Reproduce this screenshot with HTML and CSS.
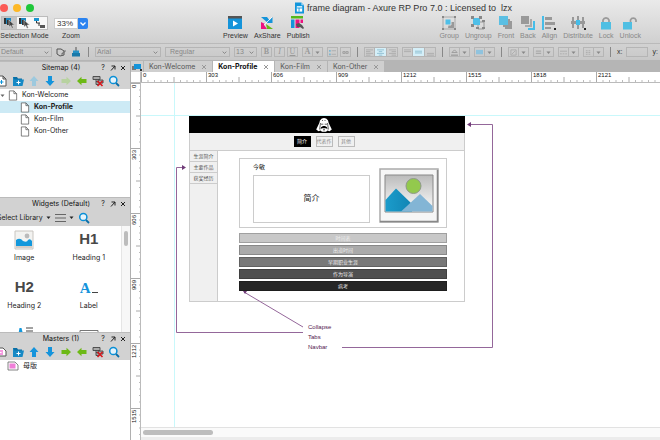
FILE: index.html
```html
<!DOCTYPE html>
<html lang="en">
<head>
<meta charset="utf-8">
<title>frame diagram - Axure RP Pro 7.0</title>
<link rel="stylesheet" href="styles.css">
</head>
<body>
<svg class="defs" aria-hidden="true">
  <symbol id="chev" viewBox="0 0 5 5"><path d="M.7 1.6 2.5 3.5 4.3 1.6" fill="none" stroke="currentColor"/></symbol>
  <symbol id="tri" viewBox="0 0 5 5"><path d="M.5 1.5h4L2.500 4z" fill="currentColor"/></symbol>
  <symbol id="close" viewBox="0 0 6 6"><path d="m1 1 4 4M5 1 1 5" fill="none" stroke="currentColor"/></symbol>
  <symbol id="popout" viewBox="0 0 6 6"><path d="M1.500 1H5v3.500M5 1 1 5.500" fill="none" stroke="currentColor"/></symbol>
  <symbol id="page" viewBox="0 0 10 12"><path d="M1 1h5l3 3v7H1zM6 1v3h3" fill="#fff" stroke="#555" stroke-width=".8"/></symbol>
  <symbol id="addpage" viewBox="0 0 12 12"><path d="M1 1h6l3 3v7H1zM7 1v3h3" fill="#fff" stroke="#555"/><path d="M5.500 5v4M3.500 7h4" stroke="#0a93d8"/></symbol>
  <symbol id="addmaster" viewBox="0 0 12 12"><path d="M0 2h7l3 3v5H0z" fill="#fff" stroke="#555"/><path d="M0 4h7v5H0z" fill="#f59ae0"/><path d="M3.500 4.500v4M1.500 6.500h4" stroke="#fff"/></symbol>
  <symbol id="master" viewBox="0 0 12 10"><path d="M1 1h7l3 3v5H1z" fill="#fff" stroke="#666" stroke-width=".8"/><path d="M2.500 2.500h6v5h-6z" fill="#f07fd8"/></symbol>
  <symbol id="folder" viewBox="0 0 12 12"><path d="M1 2h4l1 1.500h4V5H1z" fill="#0b6fa5"/><path d="M2.500 4.500H12L10.500 11H1V2z" fill="#1689c5"/><path d="M6.500 5.500v4M4.500 7.500h4" stroke="#fff"/></symbol>
  <symbol id="up" viewBox="0 0 12 12"><path d="M6 1 10.500 6H8v5H4V6H1.500z" fill="currentColor"/></symbol>
  <symbol id="down" viewBox="0 0 12 12"><path d="M6 11 10.500 6H8V1H4v5H1.500z" fill="currentColor"/></symbol>
  <symbol id="right" viewBox="0 0 12 12"><path d="M11 6 6.500 1.800V4H1.500v4h5v2.200z" fill="currentColor"/></symbol>
  <symbol id="left" viewBox="0 0 12 12"><path d="M1 6 5.500 1.800V4h5v4h-5v2.200z" fill="currentColor"/></symbol>
  <symbol id="remove" viewBox="0 0 12 12"><path d="M1 1.500h7v3H1zM4 4.500v5h3M4 6.500h3M6 5h5v3H6z" fill="#aaa" stroke="#444" stroke-width=".9"/><path d="m5.500 6 5 5M10.500 6l-5 5" stroke="#d9161c" stroke-width="1.600"/></symbol>
  <symbol id="search" viewBox="0 0 12 12"><circle cx="5.300" cy="5" r="3.600" fill="#e6f3fa" stroke="#0a8fd6" stroke-width="1.500"/><path d="m8 8 3 3" stroke="#0a6ea8" stroke-width="1.800"/></symbol>
  <symbol id="cursor" viewBox="0 0 14 12"><path d="M2 1h7v6H2z" fill="#1b86bd"/><path d="M2 1h2v6H2zM5 3h2v5H5z" fill="#333"/><path d="m7 3 5.500 5H10l1.300 2.700-1.300.5L8.800 8.500 7 10z" fill="#444" stroke="#e4e4e4" stroke-width=".5"/></symbol>
</svg>

<header class="toolbar">
  <div class="titlebar">
    <div class="lights"><i class="red"></i><i class="amber"></i><i class="green"></i></div>
    <div class="title">
      <svg viewBox="0 0 10 12" width="9" height="12"><path d="M0 0h7l3 3v9H0z" fill="#1296dc"/><path d="M2 4h6v6H2z" fill="#fff"/><path d="M2 6h6M4.500 6v4" stroke="#1296dc"/><path d="M7 0v3h3z" fill="#9ad4f2"/></svg>
      <span>frame diagram - Axure RP Pro 7.0 : Licensed to&nbsp; lzx</span>
    </div>
  </div>
  <div class="tools">
    <div class="tool modes">
      <div class="segments">
        <button class="on" aria-label="Select intersected"><svg width="14" height="12"><use href="#cursor"/></svg></button>
        <button aria-label="Select contained"><svg width="14" height="12"><use href="#cursor"/></svg></button>
        <button aria-label="Connector"><svg viewBox="0 0 14 12" width="14" height="12"><path d="M2 1h5v3H2z" fill="#1b95d0"/><path d="M8 8h5v3H8z" fill="#555"/><path d="M4.500 4v2H8M7 6v3" fill="none" stroke="#333"/></svg></button>
      </div>
      <span>Selection Mode</span>
    </div>
    <div class="tool zoom">
      <div class="zoombox"><select id="zoom"><option>33%</option></select><svg width="10" height="11" viewBox="0 0 10 11"><path d="M2.500 4.500 5 7l2.500-2.500" fill="none" stroke="#fff" stroke-width="1.300"/></svg></div>
      <label for="zoom">Zoom</label>
    </div>
    <div class="toolset share">
      <button class="tool"><svg viewBox="0 0 16 14"><path d="M1 1h14v12H1z" fill="#1594da"/><path d="M1 0h14v2.500H1z" fill="#555"/><path d="M6 4.500 11 7.500 6 10.500z" fill="#fff"/></svg><span>Preview</span></button>
      <button class="tool"><svg viewBox="0 0 16 14"><path d="M2 1h6l3 4-2 2z" fill="#1594da"/><path d="M8 7 13.500 1v6z" fill="#1594da"/><path d="M2 13V6l4 2-1 1 3 4z" fill="#ec1380"/><path d="m7 8 7 5H8z" fill="#65b816"/><path d="M5 9 13 1" stroke="#fff" stroke-width=".8"/></svg><span>AxShare</span></button>
      <button class="tool"><svg viewBox="0 0 16 14"><path d="M1 0h12v2.500H1z" fill="#57b81b"/><path d="M1 3.500h3.500V12H1z" fill="#1594da"/><path d="M5.500 3.500h4V12h-4z" fill="#ec1380"/><path d="M10.500 3.500H13V7h-2.500z" fill="#ec1380"/><path d="m6 8 3-1 3 2 2 3-1 1-3-2H7z" fill="#555"/></svg><span>Publish</span></button>
    </div>
    <div class="toolset arrange">
      <button class="tool"><svg viewBox="0 0 16 14"><path d="M2 1h12v12H2z" fill="none" stroke="#aaa"/><path d="M8 6h5v6H7z" fill="#999"/><path d="M4 3h6v6H4z" fill="#4fbfe8" stroke="#ddd"/><path d="M1 0h2v2H1zM13 0h2v2h-2zM1 12h2v2H1zM13 12h2v2h-2z" fill="#888"/></svg><span>Group</span></button>
      <button class="tool"><svg viewBox="0 0 16 14"><path d="M8 6h6v7H8z" fill="none" stroke="#999"/><path d="M3 2h7v7H3z" fill="#4fbfe8"/><path d="M1 0h3v3H1zM9 0h3v3H9zM1 8h3v3H1zM12 4h3v2h-3zM12 11h3v2h-3zM6 11h3v2H6z" fill="#888"/></svg><span>Ungroup</span></button>
      <button class="tool"><svg viewBox="0 0 16 14"><path d="M12 5h2v8H7v-2h5zM10 3h2v8H5V9h5z" fill="#999"/><path d="M1 0h9v9H1z" fill="#5bbfe3"/></svg><span>Front</span></button>
      <button class="tool"><svg viewBox="0 0 16 14"><path d="M1 0h8v8H1z" fill="#999"/><path d="M10 3h2v8H5V9h5z" fill="#aaa"/><path d="M13 5h2v9H8v-2h5z" fill="#45bde9"/></svg><span>Back</span></button>
      <button class="tool"><svg viewBox="0 0 16 14"><path d="M1 0h2v14H1z" fill="#45bde9"/><path d="M4 1h7v3H4zM4 6h10v3H4zM4 11h6v2H4z" fill="#999"/><path d="M13 12h2v2h-2z" fill="#222"/></svg><span>Align</span></button>
      <button class="tool"><svg viewBox="0 0 16 14"><path d="M2 1h2v11H2zM7 0h2v13H7zM12 1h2v11h-2z" fill="#999"/><path d="M1 5h14v3H1z" fill="#999"/><path d="M6 4h4v5H6z" fill="#45bde9"/><path d="M14 12h2v2h-2z" fill="#222"/></svg><span>Distribute</span></button>
      <button class="tool"><svg viewBox="0 0 16 14"><path d="M5 7V4a3.200 3.200 0 0 1 6 0v3" fill="none" stroke="#999" stroke-width="1.700"/><path d="M3 6h10v7.500H3z" fill="#4fbfe3"/></svg><span>Lock</span></button>
      <button class="tool"><svg viewBox="0 0 16 14"><path d="M8.500 7V4a3 3 0 0 1 5.500 0v2" fill="none" stroke="#999" stroke-width="1.700"/><path d="M1 6h9v7.500H1z" fill="#4fbfe3"/></svg><span>Unlock</span></button>
    </div>
  </div>
</header>

<div class="format">
  <div class="pick style"><select aria-label="Style"><option>Default</option></select><svg><use href="#chev"/></svg></div>
  <div class="painters">
    <svg viewBox="0 0 10 10" width="10" height="10"><path d="M1 2h4l3 2v4L4 9 1 7z" fill="none" stroke="#555"/><path d="M5 7 9 3l1 1-4 4z" fill="#777"/></svg>
    <svg viewBox="0 0 10 10" width="10" height="10"><path d="M4.500 0h1v4h-1z" fill="#555"/><path d="M2 3.500h6V6H2z" fill="#2490c4"/><path d="M1 6h8v3.500H1z" fill="#1979a9"/></svg>
  </div>
  <i class="sep"></i>
  <div class="pick font"><select aria-label="Font"><option>Arial</option></select><svg><use href="#chev"/></svg></div>
  <div class="pick weight"><select aria-label="Weight"><option>Regular</option></select><svg><use href="#chev"/></svg></div>
  <div class="pick size"><select aria-label="Size"><option>13</option></select><svg><use href="#chev"/></svg></div>
  <div class="row"><button class="serif b">B</button><button class="serif it">I</button><button class="serif un">U</button></div>
  <div class="joined"><button class="serif b">A</button><button class="arrow" aria-label="Text color"><svg><use href="#tri"/></svg></button></div>
  <div class="row"><button aria-label="Bullets"><svg viewBox="0 0 8 8"><path d="M3 2h5M3 6h5" stroke="#aaa"/><path d="M0 1h2v2H0zM0 5h2v2H0z" fill="#7fb6d0"/></svg></button><button aria-label="Link"><svg viewBox="0 0 8 8"><path d="M1 3h2.500v2H1zM4.500 3H7v2H4.500z" fill="none" stroke="#999"/></svg></button></div>
  <i class="sep"></i>
  <div class="joined"><button aria-label="Align left"><svg viewBox="0 0 8 8"><path d="M0 1h8M0 3h5M0 5h8M0 7h5" stroke="#aaa"/></svg></button><button class="active" aria-label="Align center"><svg viewBox="0 0 8 8"><path d="M0 1h8M2 3h4M0 5h8M2 7h4" stroke="#8bbdd0"/></svg></button><button aria-label="Align right"><svg viewBox="0 0 8 8"><path d="M0 1h8M3 3h5M0 5h8M3 7h5" stroke="#aaa"/></svg></button></div>
  <div class="joined"><button aria-label="Align top"><svg viewBox="0 0 8 8"><path d="M0 1h8M0 3h8" stroke="#aaa"/></svg></button><button class="active" aria-label="Align middle"><svg viewBox="0 0 8 8"><path d="M0 2.500h8M0 4.500h8" stroke="#8bbdd0"/></svg></button><button aria-label="Align bottom"><svg viewBox="0 0 8 8"><path d="M0 5h8M0 7h8" stroke="#aaa"/></svg></button></div>
  <i class="sep"></i>
  <div class="joined"><button aria-label="Fill"><svg viewBox="0 0 8 8"><path d="M4 1 7 4H1z" fill="none" stroke="#999"/><path d="M0 7h8" stroke="#888"/></svg></button><button class="arrow" aria-label="Fill options"><svg><use href="#tri"/></svg></button></div>
  <div class="joined"><button aria-label="Shadow"><svg viewBox="0 0 8 8"><path d="M0 1h8v5H0z" fill="#8fc3de"/></svg></button><button class="arrow" aria-label="Shadow options"><svg><use href="#tri"/></svg></button></div>
  <i class="sep"></i>
  <div class="joined"><button aria-label="Line color"><svg viewBox="0 0 8 8"><path d="M1 1h6v6H1zM2 6l4-4" fill="none" stroke="#aaa"/></svg></button><button class="arrow" aria-label="Line color options"><svg><use href="#tri"/></svg></button></div>
  <div class="joined"><button aria-label="Line width"><svg viewBox="0 0 8 8"><path d="M1 2.500h6M1 5h6" stroke="#aaa" stroke-width="1.500"/></svg></button><button class="arrow" aria-label="Line width options"><svg><use href="#tri"/></svg></button></div>
  <div class="joined"><button aria-label="Line style"><svg viewBox="0 0 8 8"><path d="M0 2.500h8" stroke="#aaa"/><path d="M0 5.500h8" stroke="#aaa" stroke-dasharray="2 1"/></svg></button><button class="arrow" aria-label="Line style options"><svg><use href="#tri"/></svg></button></div>
  <div class="joined"><button aria-label="Arrow style"><svg viewBox="0 0 8 8"><path d="M1 2h6M1 4h6M1 6h6" stroke="#aaa" stroke-dasharray="2 1"/></svg></button><button class="arrow" aria-label="Arrow style options"><svg><use href="#tri"/></svg></button></div>
  <i class="sep"></i>
  <label class="coord">x:<input type="text"></label>
  <label class="coord">y:<input type="text"></label>
</div>

<main class="workspace">
  <aside class="sidebar">
    <section class="panel">
      <div class="head"><h2>Sitemap (4)</h2><div class="acts"><button>?</button><button aria-label="Pop out"><svg><use href="#popout"/></svg></button><button aria-label="Close"><svg><use href="#close"/></svg></button></div></div>
      <div class="icons">
        <button aria-label="Add page"><svg><use href="#addpage"/></svg></button><button aria-label="Add folder"><svg><use href="#folder"/></svg></button><button class="blue off" aria-label="Up"><svg><use href="#up"/></svg></button><button class="blue" aria-label="Down"><svg><use href="#down"/></svg></button><button class="lime off" aria-label="Indent"><svg><use href="#right"/></svg></button><button class="lime" aria-label="Outdent"><svg><use href="#left"/></svg></button><button aria-label="Delete"><svg><use href="#remove"/></svg></button><button aria-label="Search"><svg><use href="#search"/></svg></button>
      </div>
      <ul class="tree">
        <li class="root"><svg class="twist"><use href="#tri"/></svg><svg class="doc"><use href="#page"/></svg>Kon-Welcome</li>
        <li class="current"><svg class="doc"><use href="#page"/></svg>Kon-Profile</li>
        <li><svg class="doc"><use href="#page"/></svg>Kon-Film</li>
        <li><svg class="doc"><use href="#page"/></svg>Kon-Other</li>
      </ul>
    </section>
    <section class="panel">
      <div class="head"><h2>Widgets (Default)</h2><div class="acts"><button>?</button><button aria-label="Pop out"><svg><use href="#popout"/></svg></button><button aria-label="Close"><svg><use href="#close"/></svg></button></div></div>
      <div class="library"><button>Select Library <svg class="small"><use href="#tri"/></svg></button><button aria-label="Library menu"><svg width="11" height="10" viewBox="0 0 11 10"><path d="M0 1.500h11M0 5h11M0 8.500h11" stroke="#666" stroke-width="1.200"/></svg><svg class="small"><use href="#tri"/></svg></button><button aria-label="Search"><svg width="12" height="12"><use href="#search"/></svg></button></div>
      <div class="shelf">
        <div class="widgets">
          <figure><svg width="20" height="20" viewBox="0 0 20 20"><path d="M1 1h18v18H1z" fill="#f3f3f1" stroke="#c9c5c0"/><circle cx="13" cy="6" r="2.400" fill="#bbb"/><path d="M2 10q4-3 7 1 4 2 5-1 2-2 4 1v5H2z" fill="#1398dc"/><path d="M2 16h16v2H2z" fill="#d5cdc7"/></svg><figcaption>Image</figcaption></figure>
          <figure><b>H1</b><figcaption>Heading 1</figcaption></figure>
          <figure><b>H2</b><figcaption>Heading 2</figcaption></figure>
          <figure><b class="letter">A<i></i></b><figcaption>Label</figcaption></figure>
          <figure><svg width="20" height="20" viewBox="0 0 20 20"><path d="M3 16 5.500 2h2L11 16H9l-.6-2H5.600L5 16z" fill="#1398dc"/><path d="M12 2h7M12 5h7M3 18h16" stroke="#444"/></svg></figure>
          <figure><svg width="20" height="20" viewBox="0 0 20 20"><path d="M1 4.500h18v10H1z" fill="#fff" stroke="#777"/></svg></figure>
        </div>
        <div class="track"><i></i></div>
      </div>
    </section>
    <section class="panel">
      <div class="head"><h2>Masters (1)</h2><div class="acts"><button>?</button><button aria-label="Pop out"><svg><use href="#popout"/></svg></button><button aria-label="Close"><svg><use href="#close"/></svg></button></div></div>
      <div class="icons">
        <button aria-label="Add master"><svg><use href="#addmaster"/></svg></button><button aria-label="Add folder"><svg><use href="#folder"/></svg></button><button class="blue" aria-label="Up"><svg><use href="#up"/></svg></button><button class="blue" aria-label="Down"><svg><use href="#down"/></svg></button><button class="lime" aria-label="Indent"><svg><use href="#right"/></svg></button><button class="lime" aria-label="Outdent"><svg><use href="#left"/></svg></button><button aria-label="Delete"><svg><use href="#remove"/></svg></button><button aria-label="Search"><svg><use href="#search"/></svg></button>
      </div>
      <ul class="tree masters"><li class="root"><svg width="12" height="10"><use href="#master"/></svg>母版</li></ul>
    </section>
  </aside>

  <section class="editor">
    <nav class="tabs">
      <button class="all" aria-label="All pages"><svg viewBox="0 0 10 8" width="10" height="8"><path d="M0 3h4v4H0z" fill="#777"/><path d="M2 1h7v5H2z" fill="#1594da"/><path d="M8 6h2v2H8z" fill="#333"/></svg></button>
      <a href="#">Kon-Welcome<svg><use href="#close"/></svg></a>
      <a href="#" class="open">Kon-Profile<svg><use href="#close"/></svg></a>
      <a href="#">Kon-Film<svg><use href="#close"/></svg></a>
      <a href="#">Kon-Other<svg><use href="#close"/></svg></a>
    </nav>
    <div class="sheet">
      <div class="corner"></div>
      <div class="ruler across">
        <svg><defs><pattern id="tx" width="65" height="10" patternUnits="userSpaceOnUse"><path d="M.5 0v10M33 5v5" stroke="#aaa"/><path d="M7 8v2M13.500 8v2M20 8v2M26.500 8v2M39.500 8v2M46 8v2M52.500 8v2M59 8v2" stroke="#bbb"/></pattern></defs><rect width="100%" height="100%" fill="url(#tx)"/></svg>
        <span>0</span><span>303</span><span>606</span><span>909</span><span>1212</span><span>1515</span><span>1818</span><span>2121</span>
      </div>
      <div class="ruler along">
        <svg><defs><pattern id="ty" width="10" height="65" patternUnits="userSpaceOnUse"><path d="M0 .5h10M5 33h5" stroke="#aaa"/><path d="M8 7h2M8 13.500h2M8 20h2M8 26.500h2M8 39.500h2M8 46h2M8 52.500h2M8 59h2" stroke="#bbb"/></pattern></defs><rect width="100%" height="100%" fill="url(#ty)"/></svg>
        <span>0</span><span>303</span><span>606</span><span>909</span><span>1212</span><span>1515</span>
      </div>
      <div class="canvas">
        <i class="guide v"></i><i class="guide h"></i>
        <article class="frame">
          <div class="banner"><svg viewBox="0 0 16 14" width="16" height="14"><path d="M5.500.8Q8-.8 10.500.8 12.500 2 12.700 5l3.100 6.500-2.300 1.700-2-.7-1.500 1.300H6l-1.500-1.300-2 .7L.2 11.500 3.300 5Q3.500 2 5.500.8z" fill="#fff"/><path d="M5 6.200h2.300M8.700 6.200H11M4.500 5 3.600 11.500M11.500 5l.9 6.500M6 3l1-1M9.500 3 8.500 2" fill="none" stroke="#000" stroke-width=".6"/><path d="M5 9.200 7 8h2l2 1.200.5 2.300-1.300-1.300H5.800L4.500 11.500zM7 11.500h2v.8H7z" fill="#000"/></svg></div>
          <div class="menu"><span class="on">简介</span><span>代表作</span><span>其他</span></div>
          <div class="columns">
            <div class="side"><span>生涯简介</span><span>主要作品</span><span>获奖经历</span></div>
            <div class="content">
              <div class="card">
                <div class="about"><h3>今敏</h3><div class="intro">简介</div></div>
                <svg viewBox="0 0 60 55" width="60" height="55">
                  <defs><linearGradient id="sky" x2="0" y2="1"><stop stop-color="#bbb"/><stop offset="1" stop-color="#fff"/></linearGradient><linearGradient id="sea"><stop stop-color="#1b9ccb"/><stop offset="1" stop-color="#1184b3"/></linearGradient></defs>
                  <path d="M1 1h58v53H1z" fill="#f6f6f6" stroke="#aaa" stroke-width="1.500"/><path d="M1 53.500h58M58.500 2v52" stroke="#888" stroke-width="1.500"/>
                  <path d="M6 7h48v37H6z" fill="url(#sky)" stroke="#888"/><circle cx="34.500" cy="18" r="7.500" fill="#93c94d" stroke="#8f988a"/>
                  <path d="M6.500 32 17 20.500 33 36v7.500H6.500z" fill="url(#sea)"/><path d="M22 43.500 41 26l12.500 12v5.500z" fill="#83b5d5"/>
                </svg>
              </div>
              <div class="bars"><div class="s1">时间表</div><div class="s2">出道时间</div><div class="s3">早期职业生涯</div><div class="s4">作为导演</div><div class="s5">病考</div></div>
            </div>
          </div>
        </article>
        <svg class="links" width="340" height="240" viewBox="0 0 340 240"><g fill="none" stroke="#94679a"><path d="M132 211 73 176"/><path d="M132 216.500H5.500V51.500H12"/><path d="M171 231.500H321.500V8.500H299"/></g><g fill="#703c78"><path d="M72 175h4l-2 3zM11 49l4 2.500-4 2.500zM300 6l-4 2.500 4 2.500z"/></g></svg>
        <div class="notes"><span>Collapse</span><span>Tabs</span><span>Navbar</span></div>
      </div>
      <div class="scroll"><i></i></div>
    </div>
  </section>
</main>
</body>
</html>
```
FILE: styles.css
```css
* { box-sizing: border-box; }
html, body { height: 100%; }
body {
  margin: 0;
  display: flex;
  flex-direction: column;
  overflow: hidden;
  background: #fff;
  color: #222;
  font: 7px/10px "Liberation Sans", "Noto Sans CJK SC", sans-serif;
}
svg { flex: none; display: block; }
button, select, input { font: inherit; color: inherit; margin: 0; padding: 0; border: 0; background: none; border-radius: 0; }
h2, h3, ul, figure { margin: 0; padding: 0; font-weight: normal; list-style: none; }
a { color: inherit; text-decoration: none; }
.defs { position: absolute; width: 0; height: 0; }

/* Window toolbar */
.toolbar { flex: none; background: linear-gradient(#eaeaea, #d0d0d0); border-bottom: 1px solid #bababa; }
.titlebar { display: flex; align-items: center; height: 15px; }
.lights { display: flex; gap: 5px; width: 295px; }
.lights i { width: 8px; height: 8px; border-radius: 50%; }
.red { background: #fb5b55; }
.amber { background: #fdb827; }
.green { background: #1fc73a; }
.title { display: flex; align-items: center; gap: 3px; font-size: 9px; color: #333; white-space: nowrap; }
.tools { display: flex; height: 28px; padding-right: 19px; }
.tool { display: flex; flex-direction: column; align-items: center; gap: 1px; padding-top: 1px; white-space: nowrap; color: #333; }
.tool > svg { width: 16px; height: 14px; }
.modes { width: 49px; }
.segments { display: flex; border: 1px solid #bbb; height: 14px; background: #f7f7f7; }
.segments button { width: 15px; }
.segments .on { background: #c4c4c4; }
.zoom { margin-left: 5px; width: 34px; }
.zoombox { display: flex; align-items: center; width: 34px; height: 14px; }
.zoombox select { appearance: none; flex: 1; width: 24px; height: 11px; padding-left: 2px; background: #fff; border: 1px solid #ccc; font-size: 8px; line-height: 9px; }
.zoombox svg { background: #2b83f0; border-radius: 0 2px 2px 0; }
.toolset { display: flex; gap: 6px; }
.share { margin-left: 135px; }
.arrange { margin-left: auto; }
.arrange .tool span { color: #888; }
.arrange svg { margin: 0 -1px; }

/* Format bar */
.format { flex: none; display: flex; align-items: center; gap: 4px; height: 17px; background: linear-gradient(#d2d2d2, #c8c8c8); border-bottom: 1px solid #b5b5b5; color: #888; overflow: hidden; }
.format > * { flex: none; }
.pick { display: flex; align-items: center; height: 10px; border: 1px solid #b5b5b5; padding-right: 2px; }
.pick select { appearance: none; flex: 1; min-width: 0; padding-left: 1px; height: 8px; line-height: 8px; }
.pick svg, .arrow svg { width: 5px; height: 5px; }
.style { width: 52px; border-left: 0; }
.font { width: 66px; }
.weight { width: 65px; }
.weight select { padding-left: 4px; }
.size { width: 23px; }
.painters { display: flex; gap: 5px; width: 26px; }
.sep { width: 1px; height: 10px; margin: 0 2px; background: #888; }
.row, .joined { display: flex; height: 10px; }
.row { gap: 2px; }
.row button, .joined button { width: 11px; height: 10px; border: 1px solid #b5b5b5; display: flex; align-items: center; justify-content: center; }
.joined button + button { border-left: 0; }
.row svg, .joined svg { width: 7px; height: 7px; }
.joined .arrow { width: 10px; }
.joined .arrow svg { width: 5px; height: 5px; }
.joined .active { width: 12px; background: #d5eff8; }
.serif { font: 8px/8px "Liberation Serif", serif; color: #999; }
.b { font-weight: bold; }
.it { font-style: italic; }
.un { text-decoration: underline; }
.coord { display: flex; align-items: center; gap: 4px; color: #333; }
.coord input { width: 22px; height: 10px; border: 1px solid #b5b5b5; }

/* Sidebar panels */
.workspace { flex: 1; min-height: 0; display: grid; grid-template-columns: 131px minmax(0, 1fr); }
.sidebar { display: grid; grid-template-rows: 136fr 136fr 108fr; min-height: 0; border-right: 1px solid #b0b0b0; font-family: Inter, "Noto Sans CJK SC", sans-serif; }
.panel { display: flex; flex-direction: column; min-height: 0; overflow: hidden; }
.head { flex: none; display: grid; grid-template-columns: 1fr auto; align-items: center; height: 13px; padding-right: 2px; background: #d2d2d2; border-top: 1px solid #bbb; }
.head h2 { font-size: 7px; text-align: center; padding-left: 24px; color: #111; }
.acts { display: flex; }
.acts button { width: 10px; height: 10px; display: flex; align-items: center; justify-content: center; }
.acts svg { width: 6px; height: 6px; }
.icons { flex: none; display: flex; height: 15px; align-items: center; background: #d2d2d2; gap: 4px; padding-bottom: 1px; margin-left: -4px; }
.icons svg { width: 12px; height: 12px; }
.blue { color: #1594dc; }
.blue.off { color: #9dc9de; }
.lime { color: #6db916; }
.lime.off { color: #b8d2a0; }
.tree li { display: flex; align-items: center; gap: 4px; height: 12px; padding-left: 20px; }
.tree .root { padding-left: 0; }
.tree .doc { width: 10px; height: 11px; }
.tree .twist { width: 5px; height: 5px; margin-right: -1px; color: #666; }
.tree .current { background: #cdeaf5; font-weight: bold; }
.masters .root { padding-left: 7px; }
.library { flex: none; display: flex; align-items: center; gap: 4px; height: 16px; margin-left: -3px; background: #d2d2d2; }
.library button { display: flex; align-items: center; gap: 3px; white-space: nowrap; }
.small { width: 5px; height: 5px; }
.shelf { flex: 1; min-height: 0; display: flex; }
.widgets { flex: 1; display: grid; grid-template-columns: 1fr 1fr; grid-auto-rows: 48px; margin-left: -8px; }
.widgets figure { display: flex; flex-direction: column; align-items: center; gap: 3px; padding-top: 4px; }
.widgets b { height: 20px; font: bold 15px/18px "Liberation Sans", sans-serif; color: #484848; }
.widgets .letter { display: flex; align-items: center; gap: 1px; font-family: "Liberation Serif", serif; color: #1594dc; }
.letter i { width: 6px; height: 1px; margin-top: 9px; background: #444; }
.track { width: 9px; padding: 5px 2px; background: #f7f7f7; border-left: 1px solid #e5e5e5; }
.track i { display: block; height: 15px; border-radius: 3px; background: #bcbcbc; }

/* Editor */
.editor { display: flex; flex-direction: column; min-width: 0; min-height: 0; }
.tabs { flex: none; display: flex; gap: 1px; height: 11px; background: #b5b5b5; font-family: Inter, sans-serif; color: #555; }
.tabs a, .all { display: flex; align-items: center; gap: 6px; background: #cfcfcf; }
.tabs a { padding: 0 5px; }
.tabs svg { color: #999; }
.tabs a svg { width: 6px; height: 6px; }
.all { width: 12px; justify-content: center; }
.tabs .open { background: #fff; color: #111; font-weight: bold; }
.sheet { flex: 1; min-height: 0; display: grid; grid-template: 11px minmax(0, 1fr) 13px / 10px minmax(0, 1fr); }
.corner { border-right: 1px solid #bbb; border-bottom: 1px solid #bbb; }
.ruler { position: relative; display: flex; overflow: hidden; font-size: 6px; line-height: 7px; color: #111; }
.ruler svg { position: absolute; inset: 0; width: 100%; height: 100%; }
.ruler span { flex: none; }
.across { border-bottom: 1px solid #bbb; }
.across span { width: 65px; padding-left: 2px; }
.along { grid-row: 2 / 4; flex-direction: column; border-right: 1px solid #bbb; }
.along span { height: 65px; writing-mode: vertical-rl; transform: rotate(180deg); text-align: right; padding-bottom: 2px; }
.canvas { position: relative; overflow: hidden; background: #fff; }
.guide { position: absolute; background: #c9f8fb; }
.guide.v { left: 33px; top: 0; bottom: 0; width: 1px; }
.guide.h { top: 32px; left: 0; right: 0; height: 1px; }
.scroll { grid-column: 2; border-top: 1px solid #e2e2e2; border-bottom: 3px solid #ececec; background: #fafafa; padding: 2px; }
.scroll i { display: block; width: 70px; height: 5px; border-radius: 3px; background: #bdbdbd; }

/* Wireframe on the canvas */
.frame { position: absolute; left: 48px; top: 33px; width: 276px; border: 1px solid #ccc; border-top: 0; background: #fff; font-size: 5px; line-height: 8px; }
.banner { display: flex; justify-content: center; align-items: center; height: 17px; margin: 0 -1px; padding-right: 6px; background: #000; }
.menu { display: flex; justify-content: center; align-items: center; gap: 5px; height: 18px; padding-right: 6px; background: #f0f0f0; border-bottom: 1px solid #ccc; }
.menu span { width: 17px; height: 11px; border: 1px solid #bbb; text-align: center; color: #888; }
.menu .on { background: #000; border-color: #000; color: #fff; }
.columns { display: flex; }
.side { width: 28px; background: #f0f0f0; border-right: 1px solid #ccc; }
.side span { display: block; height: 11px; line-height: 10px; border-bottom: 1px solid #ccc; text-align: center; color: #555; }
.content { flex: 1; padding: 7px 17px 10px 21px; }
.card { display: flex; justify-content: space-between; height: 70px; padding: 3px 7px 0 13px; border: 1px solid #ccc; }
.card svg { margin-top: 6px; }
.card h3 { font-size: 6px; line-height: 10px; margin-bottom: 3px; color: #222; }
.intro { display: flex; align-items: center; justify-content: center; width: 117px; height: 48px; border: 1px solid #ccc; font-size: 8px; }
.bars { display: flex; flex-direction: column; gap: 2px; margin-top: 5px; }
.bars div { height: 10px; border: 1px solid #0003; text-align: center; color: #eee; }
.s1 { background: #c8c8c8; }
.s2 { background: #aaa; }
.s3 { background: #787878; }
.s4 { background: #505050; }
.s5 { background: #262626; }
.links { position: absolute; left: 30px; top: 33px; }
.notes { position: absolute; left: 167px; top: 239px; display: flex; flex-direction: column; font-size: 6px; color: #52204f; }
```
